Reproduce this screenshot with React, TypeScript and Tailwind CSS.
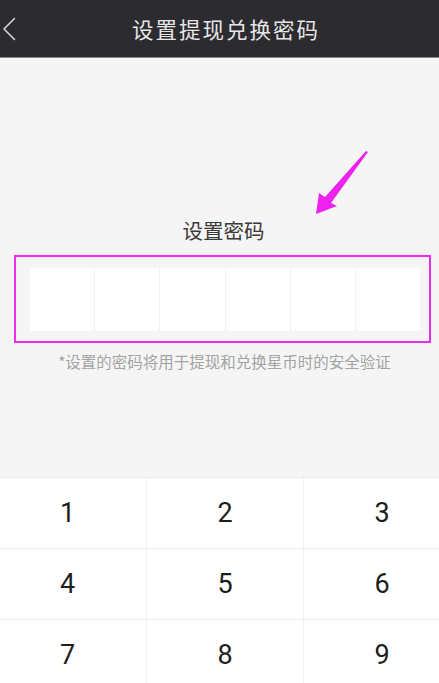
const CELLS = [0, 1, 2, 3, 4, 5];
const KEY_ROWS = [
  ['1', '2', '3'],
  ['4', '5', '6'],
  ['7', '8', '9'],
];

const App = () => {
  return (
    <div
      className="relative flex h-[683px] w-[439px] flex-col overflow-hidden bg-[#f5f5f5]"
      style={{ fontFamily: '"Noto Sans CJK SC", Roboto, sans-serif' }}
    >
      <div className="flex h-[58px] shrink-0 items-center border-b border-[#8a8a8a] bg-[#2c2b30]">
        <svg className="ml-[2px] shrink-0" width="14" height="24" viewBox="0 0 14 24">
          <polyline
            fill="none"
            points="12.5,1.5 2,12 12.5,22.5"
            stroke="#d4d4d4"
            strokeLinecap="round"
            strokeLinejoin="round"
            strokeWidth="1.6"
          />
        </svg>
        <span className="ml-[116px] text-[21.5px] leading-none tracking-[2px] text-[#e6e6e6]">
          设置提现兑换密码
        </span>
      </div>

      <div className="flex h-[419px] shrink-0 flex-col items-center pt-[162px]">
        <span className="ml-[8px] text-[20.5px] leading-[20px] text-[#3a3a3a]">设置密码</span>

        <div className="mt-[15px] ml-[6px] flex h-[88px] w-[417px] items-center border-2 border-[#ee2cee] pl-[14px]">
          <div className="flex h-[63px] w-[390px] bg-white">
            {CELLS.map(i => (
              <div key={i} className="flex-1 border-l border-[#efefef] first:border-l-0" />
            ))}
          </div>
        </div>

        <span className="mt-[8px] ml-[10px] text-[15.5px] leading-[20px] text-[#a3a3a3]">
          *设置的密码将用于提现和兑换星币时的安全验证
        </span>
      </div>

      <div className="ml-[-11px] flex w-[471px] flex-col border-t border-[#ebebeb] bg-white">
        {KEY_ROWS.map(row => (
          <div key={row[0]} className="grid h-[71px] grid-cols-3 border-b border-[#ececec]">
            {row.map(n => (
              <div
                key={n}
                className="flex items-center justify-center border-l border-[#f0f0f0] text-[27px] text-[#1e1e1e] first:border-l-0"
                style={{ fontFamily: 'Roboto, sans-serif' }}
              >
                {n}
              </div>
            ))}
          </div>
        ))}
      </div>

      <svg
        className="pointer-events-none absolute left-0 top-0"
        width="439"
        height="683"
        viewBox="0 0 439 683"
      >
        <polygon
          fill="#ee22ee"
          points="368,152 331,203 337,206 316,214 319,193 325,197 366,151"
        />
      </svg>
    </div>
  );
};

export default App;
